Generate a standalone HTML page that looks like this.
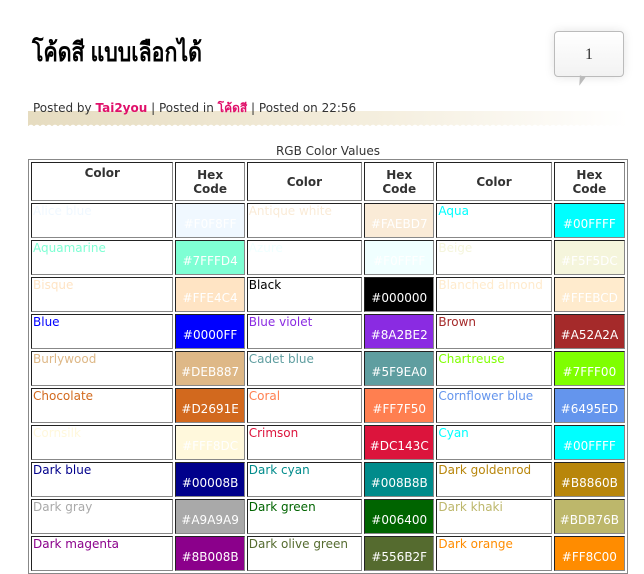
<!DOCTYPE html>
<html><head><meta charset="utf-8"><style>
body{margin:0;width:644px;height:568px;overflow:hidden;background:#fff;font-family:"DejaVu Sans","Liberation Sans",sans-serif;position:relative}
h1{position:absolute;left:32px;top:32px;margin:0;font:bold 26px "Liberation Sans","Noto Sans CJK SC",sans-serif;color:#000;transform:scaleX(0.82);transform-origin:left top;white-space:nowrap}
.bub{position:absolute;left:554px;top:31px;width:68px;height:44px;border:1px solid #bbb;border-radius:4px;background:linear-gradient(#fff,#f2f2f2);box-shadow:0 0 10px #e4e4e4;text-align:center;font:16px "Liberation Serif",serif;line-height:46px;color:#333}
.tail{position:absolute;left:578px;top:76px;width:0;height:0;border-left:3px solid transparent;border-right:3px solid transparent;border-top:10px solid #bbb;transform:rotate(20deg)}
.meta{position:absolute;left:33px;top:99px;font-size:12px;color:#333}
.meta b{color:#e0106a}
.band{position:absolute;left:28px;top:111px;width:600px;height:15px;background:linear-gradient(90deg,#e6dcc0,#f5efdf 60%,#fff);}
.wave{position:absolute;left:28px;top:122px;width:600px;height:6px;background:radial-gradient(circle at 3px 6px,#fff 3px,transparent 3.5px);background-size:6px 6px}
.cap{position:absolute;left:28px;width:600px;top:144px;text-align:center;font-size:12px;color:#333}
table{position:absolute;left:28px;top:159px;width:600px;table-layout:fixed;border:1px solid #888;border-spacing:2px;border-collapse:separate}
td,th{border:1px solid;border-color:#222 #888 #888 #222;padding:0 1px;font-size:12px;font-weight:normal;vertical-align:top;height:33px;line-height:14px;overflow:hidden;white-space:nowrap}
th{font-weight:bold;color:#333;vertical-align:middle;text-align:center;height:34px}
td.h{color:#fff;vertical-align:middle;text-align:center;padding-top:6px;height:27px}
</style></head><body>
<h1>โค้ดสี แบบเลือกได้</h1>
<div class="bub">1</div><div class="tail"></div>
<div class="band"></div><div class="wave"></div>
<div class="meta">Posted by <b>Tai2you</b> | Posted in <b>โค้ดสี</b> | Posted on 22:56</div>
<div class="cap">RGB Color Values</div>
<table>
<colgroup><col style="width:142px"><col style="width:69px"><col style="width:115px"><col style="width:70px"><col style="width:115px"><col style="width:71px"></colgroup>
<tr><th style="vertical-align:top;padding-top:3px">Color</th><th>Hex<br>Code</th><th>Color</th><th>Hex<br>Code</th><th>Color</th><th>Hex<br>Code</th></tr>
<tr><td style="color:#F0F8FF">Alice blue</td><td class="h" style="background:#F0F8FF">#F0F8FF</td><td style="color:#FAEBD7">Antique white</td><td class="h" style="background:#FAEBD7">#FAEBD7</td><td style="color:#00FFFF">Aqua</td><td class="h" style="background:#00FFFF">#00FFFF</td></tr>
<tr><td style="color:#7FFFD4">Aquamarine</td><td class="h" style="background:#7FFFD4">#7FFFD4</td><td style="color:#F0FFFF">Azure</td><td class="h" style="background:#F0FFFF">#F0FFFF</td><td style="color:#F5F5DC">Beige</td><td class="h" style="background:#F5F5DC">#F5F5DC</td></tr>
<tr><td style="color:#FFE4C4">Bisque</td><td class="h" style="background:#FFE4C4">#FFE4C4</td><td style="color:#000000">Black</td><td class="h" style="background:#000000">#000000</td><td style="color:#FFEBCD">Blanched almond</td><td class="h" style="background:#FFEBCD">#FFEBCD</td></tr>
<tr><td style="color:#0000FF">Blue</td><td class="h" style="background:#0000FF">#0000FF</td><td style="color:#8A2BE2">Blue violet</td><td class="h" style="background:#8A2BE2">#8A2BE2</td><td style="color:#A52A2A">Brown</td><td class="h" style="background:#A52A2A">#A52A2A</td></tr>
<tr><td style="color:#DEB887">Burlywood</td><td class="h" style="background:#DEB887">#DEB887</td><td style="color:#5F9EA0">Cadet blue</td><td class="h" style="background:#5F9EA0">#5F9EA0</td><td style="color:#7FFF00">Chartreuse</td><td class="h" style="background:#7FFF00">#7FFF00</td></tr>
<tr><td style="color:#D2691E">Chocolate</td><td class="h" style="background:#D2691E">#D2691E</td><td style="color:#FF7F50">Coral</td><td class="h" style="background:#FF7F50">#FF7F50</td><td style="color:#6495ED">Cornflower blue</td><td class="h" style="background:#6495ED">#6495ED</td></tr>
<tr><td style="color:#FFF8DC">Cornsilk</td><td class="h" style="background:#FFF8DC">#FFF8DC</td><td style="color:#DC143C">Crimson</td><td class="h" style="background:#DC143C">#DC143C</td><td style="color:#00FFFF">Cyan</td><td class="h" style="background:#00FFFF">#00FFFF</td></tr>
<tr><td style="color:#00008B">Dark blue</td><td class="h" style="background:#00008B">#00008B</td><td style="color:#008B8B">Dark cyan</td><td class="h" style="background:#008B8B">#008B8B</td><td style="color:#B8860B">Dark goldenrod</td><td class="h" style="background:#B8860B">#B8860B</td></tr>
<tr><td style="color:#A9A9A9">Dark gray</td><td class="h" style="background:#A9A9A9">#A9A9A9</td><td style="color:#006400">Dark green</td><td class="h" style="background:#006400">#006400</td><td style="color:#BDB76B">Dark khaki</td><td class="h" style="background:#BDB76B">#BDB76B</td></tr>
<tr><td style="color:#8B008B">Dark magenta</td><td class="h" style="background:#8B008B">#8B008B</td><td style="color:#556B2F">Dark olive green</td><td class="h" style="background:#556B2F">#556B2F</td><td style="color:#FF8C00">Dark orange</td><td class="h" style="background:#FF8C00">#FF8C00</td></tr>
</table>
</body></html>
